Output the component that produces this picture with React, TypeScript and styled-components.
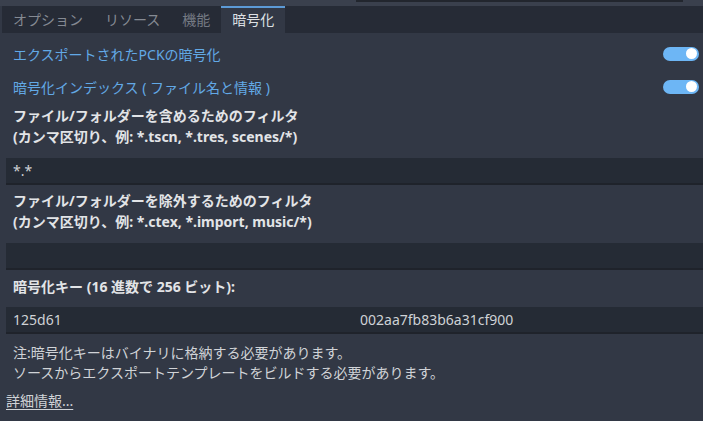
import React from "react";
import styled, { createGlobalStyle } from "styled-components";

const Global = createGlobalStyle`
  html, body { margin: 0; padding: 0; background: #323845; }
  body { font-family: "Noto Sans", "Noto Sans CJK JP", sans-serif; }
`;

const Root = styled.div`
  width: 703px;
  height: 421px;
  overflow: hidden;
  background: #323845;
  display: flex;
  flex-direction: column;
  font-family: "Noto Sans", "Noto Sans CJK JP", sans-serif;
  font-size: 14px;
  color: #cfd2d6;
`;

const TopStrip = styled.div`
  height: 6px;
  background: #3a404d;
  display: flex;
  padding-left: 356px;
`;

const TopBox = styled.div`
  width: 327px;
  height: 2px;
  background: #22262e;
`;

const TabBar = styled.div`
  height: 27px;
  margin-left: 2px;
  background: #262b36;
  display: flex;
  align-items: stretch;
`;

const Tab = styled.div<{ $active?: boolean; $dim?: boolean }>`
  padding: 0 11px;
  display: flex;
  align-items: center;
  box-sizing: border-box;
  font-size: 14px;
  line-height: 1;
  color: ${(p) => (p.$active ? "#dde0e4" : p.$dim ? "#747983" : "#858a93")};
  background: ${(p) => (p.$active ? "#323845" : "transparent")};
  border-top: 2px solid ${(p) => (p.$active ? "#5c9ad6" : "transparent")};
  padding-bottom: 2px;
`;

const Content = styled.div`
  flex: 1;
  display: flex;
  flex-direction: column;
  padding: 4px 0 0 6px;
`;

const ToggleRow = styled.div`
  height: 33px;
  display: flex;
  align-items: center;
  justify-content: space-between;
  padding: 0 4px 0 7px;
`;

const ToggleLabel = styled.span`
  color: #62a9e6;
  font-size: 14px;
  white-space: pre;
`;

const Switch = styled.div`
  width: 36px;
  height: 14px;
  border-radius: 7px;
  background: #6db6f5;
  display: flex;
  align-items: center;
  justify-content: flex-end;
  padding-right: 2px;
  box-sizing: border-box;
`;

const Knob = styled.div`
  width: 11px;
  height: 11px;
  border-radius: 50%;
  background: #ffffff;
`;

const Heading = styled.div<{ $mt: number }>`
  margin-top: ${(p) => p.$mt}px;
  padding-left: 7px;
  font-weight: 700;
  color: #e2e4e7;
  line-height: 21px;
  font-size: 14px;
`;

const Field = styled.div<{ $mt: number }>`
  margin-top: ${(p) => p.$mt}px;
  height: 25px;
  background: #252b35;
  border-bottom: 2px solid #1f232b;
  display: flex;
  align-items: center;
  padding-left: 7px;
  color: #cfd2d6;
  font-size: 14px;
`;

const FieldPart = styled.span<{ $w?: number }>`
  width: ${(p) => (p.$w ? `${p.$w}px` : "auto")};
`;

const Note = styled.div`
  margin-top: 9px;
  padding-left: 7px;
  line-height: 20px;
  color: #d0d3d7;
  font-size: 14px;
`;

const Link = styled.a`
  margin-top: 8px;
  align-self: flex-start;
  line-height: 20px;
  color: #d0d3d7;
  text-decoration: underline;
  text-underline-offset: 3px;
  font-size: 14px;
`;

export default function App() {
  return (
    <Root>
      <Global />
      <TopStrip>
        <TopBox />
      </TopStrip>
      <TabBar>
        <Tab>オプション</Tab>
        <Tab>リソース</Tab>
        <Tab $dim>機能</Tab>
        <Tab $active>暗号化</Tab>
      </TabBar>
      <Content>
        <ToggleRow>
          <ToggleLabel>エクスポートされたPCKの暗号化</ToggleLabel>
          <Switch>
            <Knob />
          </Switch>
        </ToggleRow>
        <ToggleRow>
          <ToggleLabel>暗号化インデックス ( ファイル名と情報 )</ToggleLabel>
          <Switch>
            <Knob />
          </Switch>
        </ToggleRow>
        <Heading $mt={2}>
          ファイル/フォルダーを含めるためのフィルタ
          <br />
          (カンマ区切り、例: *.tscn, *.tres, scenes/*)
        </Heading>
        <Field $mt={11}>*.*</Field>
        <Heading $mt={5}>
          ファイル/フォルダーを除外するためのフィルタ
          <br />
          (カンマ区切り、例: *.ctex, *.import, music/*)
        </Heading>
        <Field $mt={11} />
        <Heading $mt={6}>暗号化キー (16 進数で 256 ビット):</Heading>
        <Field $mt={10}>
          <FieldPart $w={347}>125d61</FieldPart>
          <FieldPart>002aa7fb83b6a31cf900</FieldPart>
        </Field>
        <Note>
          注:暗号化キーはバイナリに格納する必要があります。
          <br />
          ソースからエクスポートテンプレートをビルドする必要があります。
        </Note>
        <Link>詳細情報...</Link>
      </Content>
    </Root>
  );
}
